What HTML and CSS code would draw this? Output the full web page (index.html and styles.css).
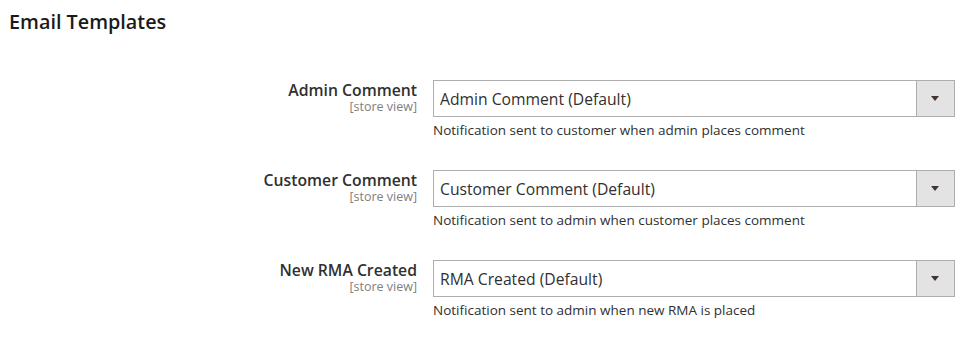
FILE: index.html
```html
<!DOCTYPE html>
<html lang="en">
<head>
  <meta charset="UTF-8">
  <title>Email Templates</title>
  <link rel="stylesheet" href="styles.css">
</head>
<body>

<h2 class="section-title">Email Templates</h2>

<!-- Email template fields -->
<div class="config-rows">
  <div class="config-row">
    <div class="field-label">
      <label for="adminComment">Admin Comment</label>
      <span class="scope">[store view]</span>
    </div>
    <div class="field-control">
      <div class="select-wrap">
        <select id="adminComment">
          <option>Admin Comment (Default)</option>
        </select>
        <span class="select-arrow"></span>
      </div>
      <p class="note">Notification sent to customer when admin places comment</p>
    </div>
  </div>

  <div class="config-row">
    <div class="field-label">
      <label for="customerComment">Customer Comment</label>
      <span class="scope">[store view]</span>
    </div>
    <div class="field-control">
      <div class="select-wrap">
        <select id="customerComment">
          <option>Customer Comment (Default)</option>
        </select>
        <span class="select-arrow"></span>
      </div>
      <p class="note">Notification sent to admin when customer places comment</p>
    </div>
  </div>

  <div class="config-row">
    <div class="field-label">
      <label for="rmaCreated">New RMA Created</label>
      <span class="scope">[store view]</span>
    </div>
    <div class="field-control">
      <div class="select-wrap">
        <select id="rmaCreated">
          <option>RMA Created (Default)</option>
        </select>
        <span class="select-arrow"></span>
      </div>
      <p class="note">Notification sent to admin when new RMA is placed</p>
    </div>
  </div>
</div>

</body>
</html>
```

FILE: styles.css
```css
body {
  font-family: "Open Sans", Arial, sans-serif;
  color: #303030;
  margin: 0;
  background: #fff;
}
.section-title {
  font-size: 19.8px;
  font-weight: 600;
  color: #1a1a1a;
  margin: 0;
  padding: 8px 0 0 9px;
  line-height: 28px;
}
.config-rows {
  padding-top: 44px;
}
.config-row {
  display: grid;
  grid-template-columns: 417px 522px;
  column-gap: 16px;
  margin-bottom: 31px;
}
.field-label {
  text-align: right;
  padding-top: 1px;
}
.field-label label {
  display: block;
  font-size: 15.75px;
  font-weight: 600;
  line-height: 18px;
}
.scope {
  display: block;
  font-size: 12.5px;
  color: #808080;
  line-height: 14px;
  margin-top: 1px;
}
.select-wrap {
  position: relative;
  height: 37px;
}
select {
  appearance: none;
  width: 100%;
  height: 37px;
  border: 1px solid #adadad;
  border-radius: 0;
  background: #fff;
  font-family: inherit;
  font-size: 15.7px;
  color: #303030;
  padding: 0 44px 0 6px;
  margin: 0;
}
.select-arrow {
  position: absolute;
  top: 1px;
  right: 1px;
  width: 37px;
  height: 35px;
  background: #e3e3e3;
  border-left: 1px solid #adadad;
  pointer-events: none;
}
.select-arrow::after {
  content: "";
  position: absolute;
  left: 14px;
  top: 15px;
  border-left: 4px solid transparent;
  border-right: 4px solid transparent;
  border-top: 5px solid #41362f;
}
.note {
  font-size: 13.5px;
  margin: 4px 0 0;
  line-height: 18px;
}
```
